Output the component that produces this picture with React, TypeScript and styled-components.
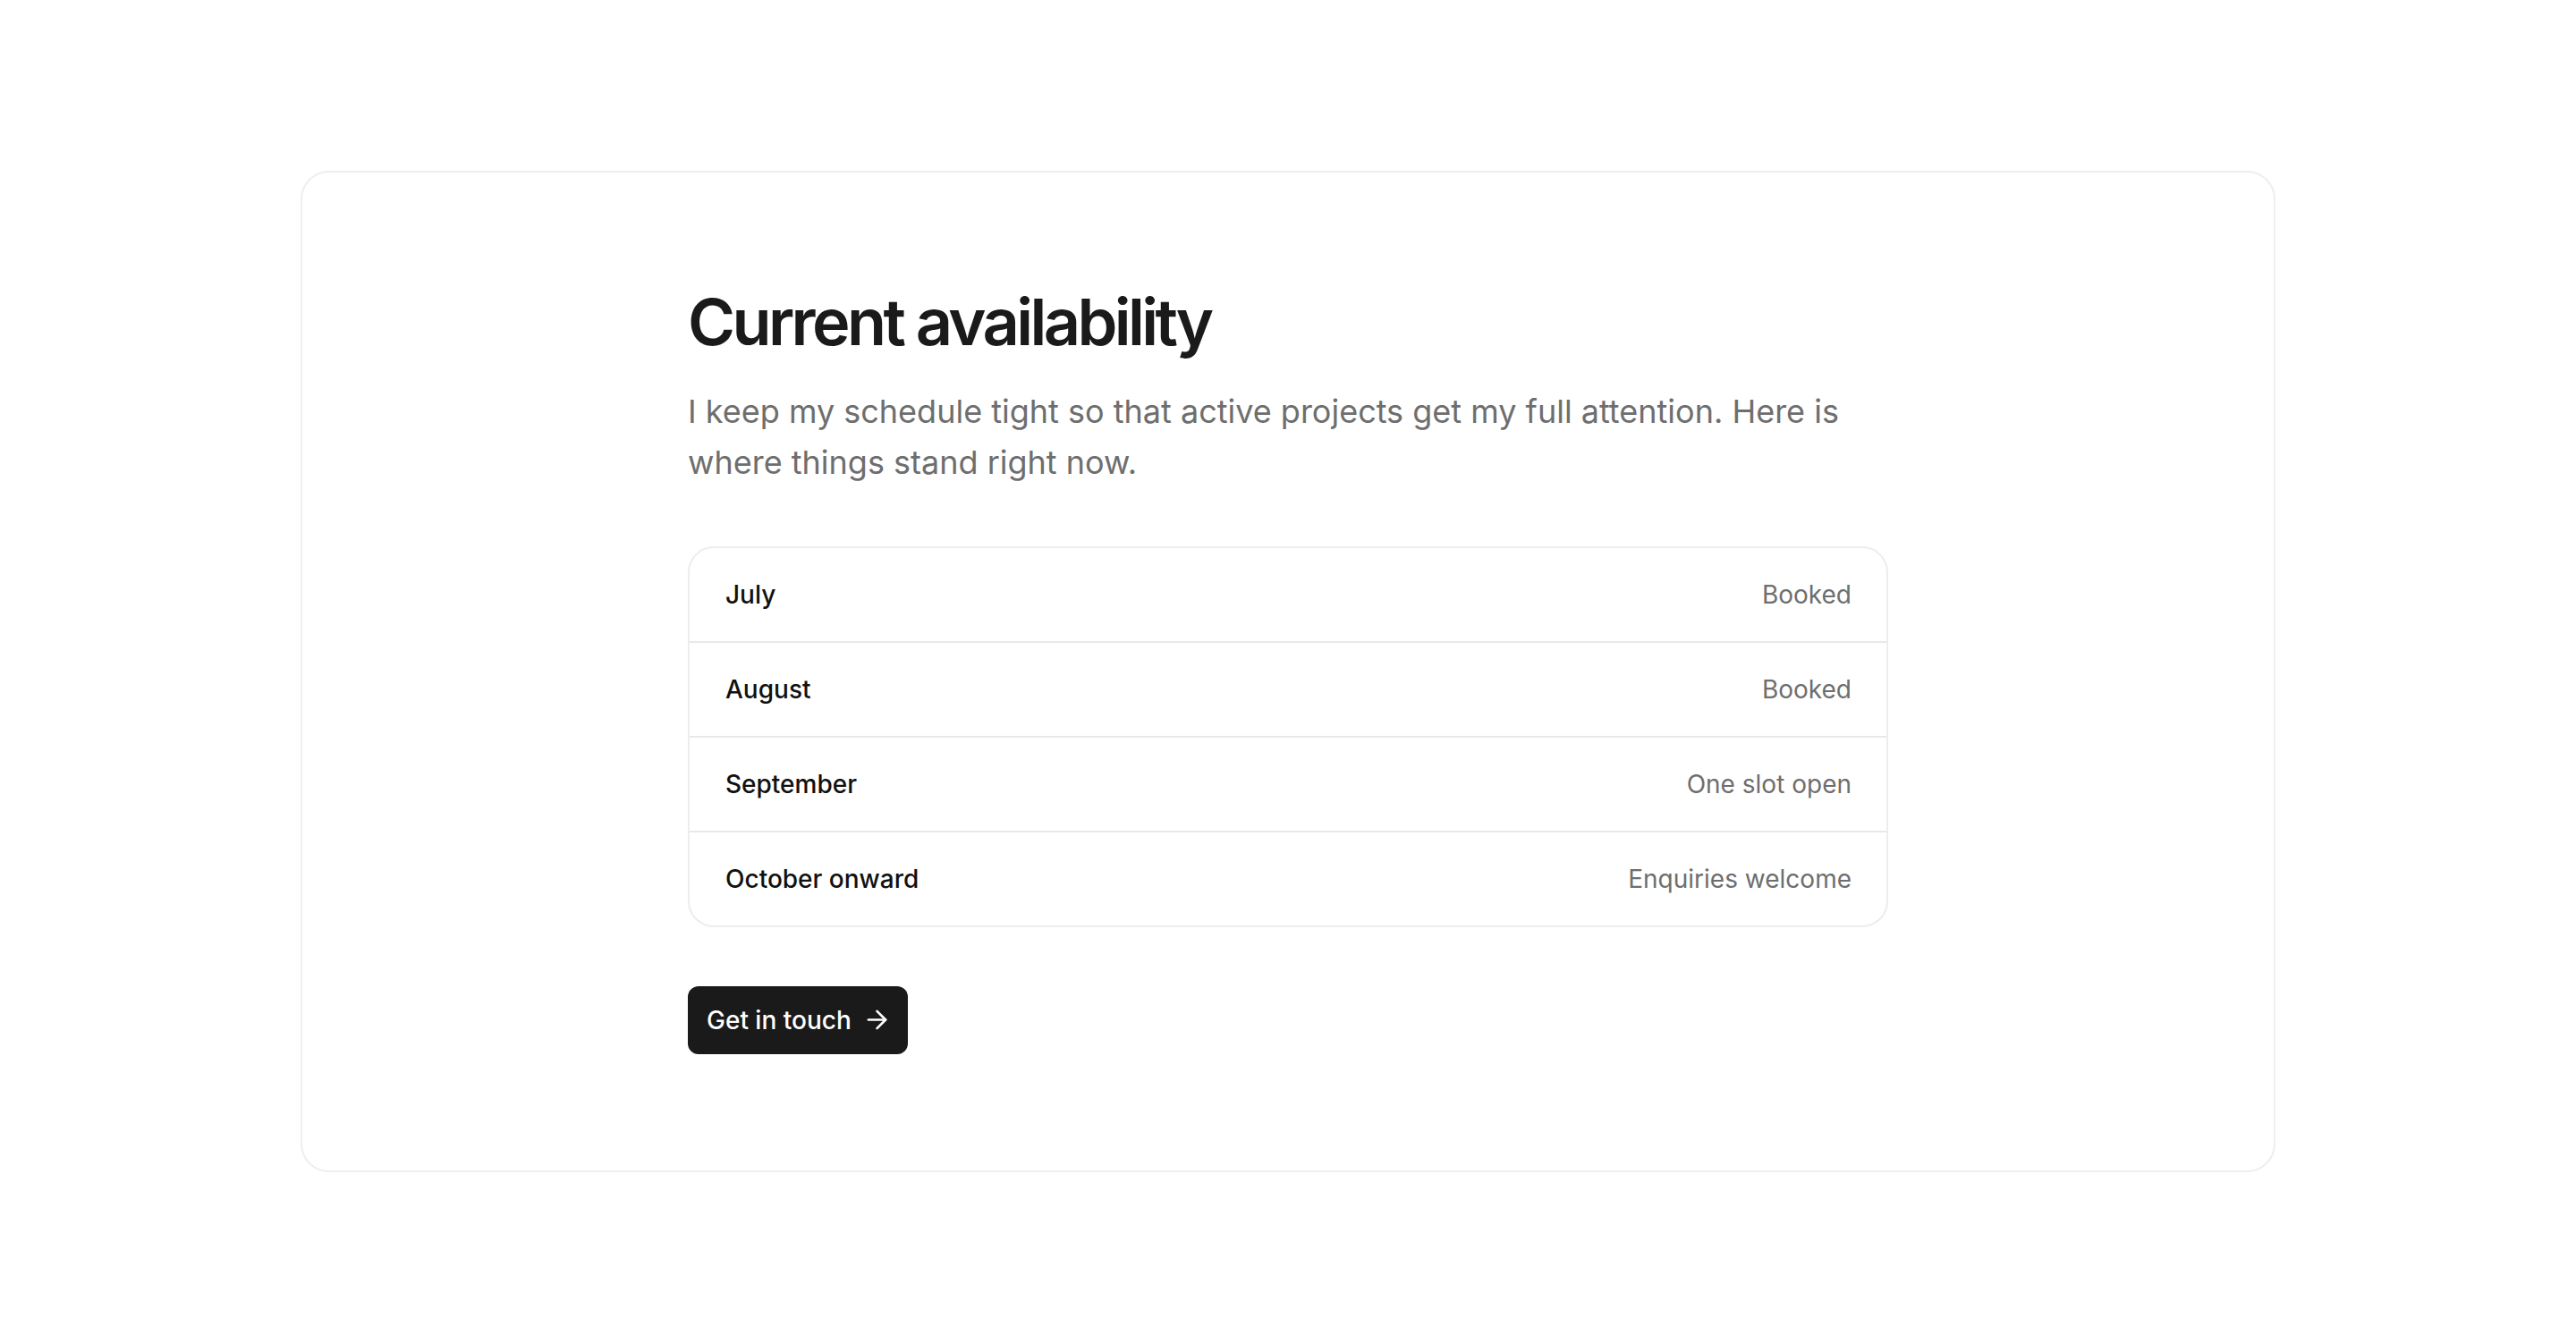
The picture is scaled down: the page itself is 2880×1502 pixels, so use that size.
import React from "react";
import styled, { createGlobalStyle } from "styled-components";
import { ArrowRight } from "lucide-react";

const GlobalStyle = createGlobalStyle`
  html, body {
    margin: 0;
    padding: 0;
    background: #ffffff;
  }
  body {
    font-family: Inter, "Noto Sans", "Liberation Sans", sans-serif;
    -webkit-font-smoothing: antialiased;
  }
  * { box-sizing: border-box; }
`;

const Page = styled.main`
  min-height: 100vh;
  display: flex;
  align-items: center;
  justify-content: center;
  padding: 0 336px;
`;

const Card = styled.section`
  width: 100%;
  max-width: 2208px;
  border: 2px solid #eeeeee;
  border-radius: 32px;
  background: #ffffff;
  padding: 127px 0 130px;
  display: flex;
  justify-content: center;
`;

const Column = styled.div`
  width: 1342px;
  display: flex;
  flex-direction: column;
  align-items: flex-start;
`;

const Title = styled.h1`
  margin: 0;
  font-size: 72px;
  line-height: 1.1;
  font-weight: 600;
  letter-spacing: -0.05em;
  color: #1a1a1a;
`;

const Lead = styled.p`
  margin: 32px 0 0;
  font-size: 36px;
  line-height: 57.6px;
  font-weight: 400;
  color: #6e6e6e;
`;

const Table = styled.ul`
  list-style: none;
  margin: 64px 0 0;
  padding: 0;
  width: 100%;
  border: 2px solid #ededed;
  border-radius: 29px;
  overflow: hidden;
`;

const Row = styled.li`
  display: flex;
  justify-content: space-between;
  align-items: center;
  padding: 32px 39px 32px 40px;
  line-height: 40px;
  font-size: 28px;
  border-bottom: 2px solid #e8e8e8;
  &:last-child {
    border-bottom: none;
  }
`;

const Month = styled.span`
  font-weight: 500;
  color: #111111;
`;

const Status = styled.span`
  font-weight: 400;
  color: #6e6e6e;
`;

const Button = styled.a`
  margin-top: 66px;
  display: inline-flex;
  align-items: center;
  gap: 12px;
  height: 76px;
  padding: 0 18px 0 21px;
  border-radius: 12px;
  background: #1a1a1a;
  color: #ffffff;
  font-size: 28px;
  font-weight: 500;
  text-decoration: none;
  cursor: pointer;
`;

const rows = [
  { month: "July", status: "Booked" },
  { month: "August", status: "Booked" },
  { month: "September", status: "One slot open" },
  { month: "October onward", status: "Enquiries welcome" },
];

export default function App() {
  return (
    <>
      <GlobalStyle />
      <Page>
        <Card>
          <Column>
            <Title>Current availability</Title>
            <Lead>
              I keep my schedule tight so that active projects get my full attention. Here is
              where things stand right now.
            </Lead>
            <Table>
              {rows.map((r) => (
                <Row key={r.month}>
                  <Month>{r.month}</Month>
                  <Status>{r.status}</Status>
                </Row>
              ))}
            </Table>
            <Button href="#">
              Get in touch
              <ArrowRight size={33} strokeWidth={1.9} />
            </Button>
          </Column>
        </Card>
      </Page>
    </>
  );
}
